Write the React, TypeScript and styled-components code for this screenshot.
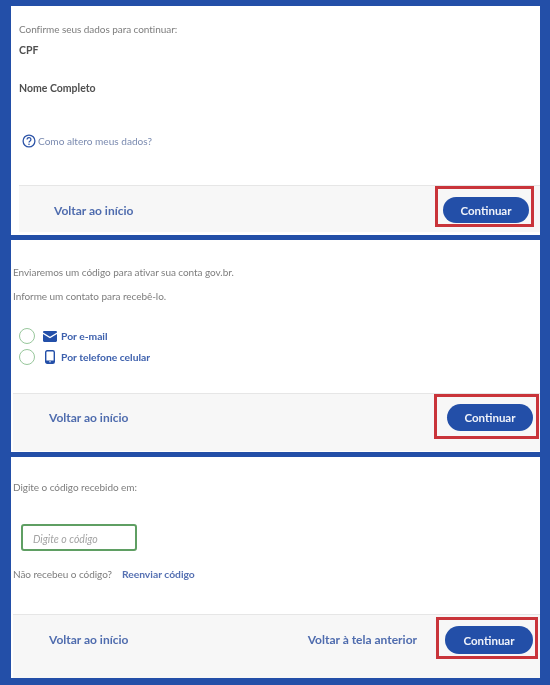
import React from "react";
import styled, { createGlobalStyle } from "styled-components";

const Global = createGlobalStyle`
  html, body { margin: 0; padding: 0; background: #234fa8; }
  body { font-family: Lato, "Open Sans", "Liberation Sans", sans-serif; }
`;

const Page = styled.div`
  width: 550px;
  height: 685px;
  box-sizing: border-box;
  padding: 6px 10px 0 11px;
  display: flex;
  flex-direction: column;
  gap: 5px;
  background: #234fa8;
  overflow: hidden;
  filter: blur(0.55px);
`;

const Panel = styled.section<{ $h: number; $inset: number; $bottom: number }>`
  height: ${(p) => p.$h}px;
  box-sizing: border-box;
  flex: none;
  background: #fff;
  display: flex;
  flex-direction: column;
  padding: 0 0 ${(p) => p.$bottom}px ${(p) => p.$inset}px;
`;

const Body = styled.div<{ $top: number }>`
  flex: 1;
  padding-top: ${(p) => p.$top}px;
  display: flex;
  flex-direction: column;
`;

const Text = styled.p<{ $mb?: number }>`
  margin: 0 0 ${(p) => p.$mb ?? 0}px;
  font-size: 10px;
  line-height: 14px;
  letter-spacing: -0.05px;
  color: #7d7d7d;
`;

const Label = styled.p<{ $mb?: number }>`
  margin: 0 0 ${(p) => p.$mb ?? 0}px;
  font-size: 10.5px;
  line-height: 14px;
  font-weight: 700;
  color: #505050;
`;

const Help = styled.div`
  display: flex;
  align-items: center;
  gap: 2px;
  margin-left: 3px;
  font-size: 10.1px;
  line-height: 14px;
  color: #7b8bb0;
  svg { flex: none; }
`;

const Options = styled.div`
  display: flex;
  flex-direction: column;
  gap: 5px;
  margin-left: 6px;
`;

const Option = styled.div`
  display: flex;
  align-items: center;
  height: 16px;
  font-size: 10.3px;
  font-weight: 700;
  color: #3d60ad;
`;

const Radio = styled.span`
  width: 16px;
  height: 16px;
  box-sizing: border-box;
  border: 1.5px solid #98c79c;
  border-radius: 50%;
  flex: none;
  margin-right: 8px;
`;

const IconSlot = styled.span`
  width: 14px;
  display: flex;
  justify-content: center;
  margin-right: 4px;
  flex: none;
`;

const Input = styled.input`
  width: 116px;
  height: 27px;
  box-sizing: border-box;
  margin: 0 0 16px 8px;
  padding: 2px 0 0 10px;
  border: 2px solid #5f9f63;
  border-radius: 3px;
  background: #fff;
  font: italic 10.5px Lato, sans-serif;
  outline: none;
  &::placeholder { color: #a3a3a3; opacity: 1; }
`;

const Resend = styled.div`
  display: flex;
  gap: 10px;
  align-items: center;
`;

const ResendLink = styled.a`
  font-size: 10.3px;
  line-height: 14px;
  font-weight: 700;
  color: #5570b2;
`;

const Footer = styled.footer<{ $h: number; $left: number; $right: number }>`
  height: ${(p) => p.$h}px;
  box-sizing: border-box;
  flex: none;
  background: #f7f7f7;
  border-top: 1px solid #e6e6e6;
  display: flex;
  align-items: flex-start;
  padding: 0 ${(p) => p.$right}px 0 ${(p) => p.$left}px;
`;

const FooterLink = styled.a<{ $top: number; $auto?: boolean }>`
  font-size: 12px;
  line-height: 16px;
  font-weight: 700;
  color: #4f6cae;
  margin-top: ${(p) => p.$top}px;
  margin-left: ${(p) => (p.$auto ? "auto" : "0")};
`;

const Highlight = styled.div<{ $w: number; $h: number; $pl: number; $pt: number; $top: number; $ml: number }>`
  width: ${(p) => p.$w}px;
  height: ${(p) => p.$h}px;
  box-sizing: border-box;
  border: 3px solid #c9343a;
  padding: ${(p) => p.$pt}px 0 0 ${(p) => p.$pl}px;
  margin-top: ${(p) => p.$top}px;
  margin-left: ${(p) => (p.$ml ? `${p.$ml}px` : "auto")};
  flex: none;
`;

const Button = styled.button<{ $w: number; $h: number }>`
  display: block;
  width: ${(p) => p.$w}px;
  height: ${(p) => p.$h}px;
  border: 0;
  padding: 0;
  border-radius: 14px;
  background: #234fa8;
  color: #f0f3fa;
  font: 700 11.5px Lato, sans-serif;
`;

const Tail = styled.span<{ $w: number }>`
  width: ${(p) => p.$w}px;
  flex: none;
`;

const QuestionIcon = () => (
  <svg width="14" height="14" viewBox="0 0 14 14" aria-hidden="true">
    <circle cx="7" cy="7" r="5.9" fill="none" stroke="#2e55a8" strokeWidth="1.3" />
    <path d="M5.1 5.5a1.9 1.9 0 1 1 3 1.5c-.7.5-1.1.8-1.1 1.5" fill="none" stroke="#2e55a8" strokeWidth="1.3" />
    <circle cx="7" cy="10.2" r=".8" fill="#2e55a8" />
  </svg>
);

const MailIcon = () => (
  <svg width="14" height="11" viewBox="0 0 14 11" aria-hidden="true">
    <path d="M1.2 0h11.6c.6 0 1.2.5 1.2 1.1v.3L7 5.7 0 1.4v-.3C0 .5.6 0 1.2 0z" fill="#234fa8" />
    <path d="M0 3l7 4.3L14 3v6.8c0 .7-.6 1.2-1.2 1.2H1.2C.6 11 0 10.5 0 9.8z" fill="#234fa8" />
  </svg>
);

const PhoneIcon = () => (
  <svg width="10" height="14" viewBox="0 0 10 14" aria-hidden="true">
    <rect x=".7" y=".7" width="8.6" height="12.6" rx="1.5" fill="none" stroke="#234fa8" strokeWidth="1.4" />
    <rect x="1" y="10.5" width="8" height="2.5" fill="#234fa8" />
    <circle cx="5" cy="11.7" r=".7" fill="#fff" />
  </svg>
);

export default function App() {
  return (
    <Page>
      <Global />
      <Panel $h={229} $inset={8} $bottom={3}>
        <Body $top={16}>
          <Text $mb={7}>Confirme seus dados para continuar:</Text>
          <Label $mb={24}>CPF</Label>
          <Label $mb={39}>Nome Completo</Label>
          <Help>
            <QuestionIcon />
            Como altero meus dados?
          </Help>
        </Body>
        <Footer $h={47} $left={35} $right={0}>
          <FooterLink $top={17}>Voltar ao início</FooterLink>
          <Highlight $w={99} $h={41} $pl={5} $pt={8} $top={0} $ml={0}>
            <Button $w={86} $h={26}>Continuar</Button>
          </Highlight>
          <Tail $w={6} />
        </Footer>
      </Panel>

      <Panel $h={212} $inset={2} $bottom={1}>
        <Body $top={25}>
          <Text $mb={10}>Enviaremos um código para ativar sua conta gov.br.</Text>
          <Text $mb={25}>Informe um contato para recebê-lo.</Text>
          <Options>
            <Option>
              <Radio />
              <IconSlot><MailIcon /></IconSlot>
              Por e-mail
            </Option>
            <Option>
              <Radio />
              <IconSlot><PhoneIcon /></IconSlot>
              Por telefone celular
            </Option>
          </Options>
        </Body>
        <Footer $h={58} $left={36} $right={0}>
          <FooterLink $top={16}>Voltar ao início</FooterLink>
          <Highlight $w={105} $h={45} $pl={10} $pt={7} $top={0} $ml={0}>
            <Button $w={86} $h={27}>Continuar</Button>
          </Highlight>
          <Tail $w={1} />
        </Footer>
      </Panel>

      <Panel $h={221} $inset={2} $bottom={0}>
        <Body $top={23}>
          <Text $mb={30}>Digite o código recebido em:</Text>
          <Input placeholder="Digite o código" readOnly />
          <Resend>
            <Text>Não recebeu o código?</Text>
            <ResendLink>Reenviar código</ResendLink>
          </Resend>
        </Body>
        <Footer $h={64} $left={36} $right={0}>
          <FooterLink $top={17}>Voltar ao início</FooterLink>
          <FooterLink $top={17} $auto>Voltar à tela anterior</FooterLink>
          <Highlight $w={102} $h={42} $pl={6} $pt={6} $top={2} $ml={19}>
            <Button $w={88} $h={28}>Continuar</Button>
          </Highlight>
          <Tail $w={2} />
        </Footer>
      </Panel>
    </Page>
  );
}
